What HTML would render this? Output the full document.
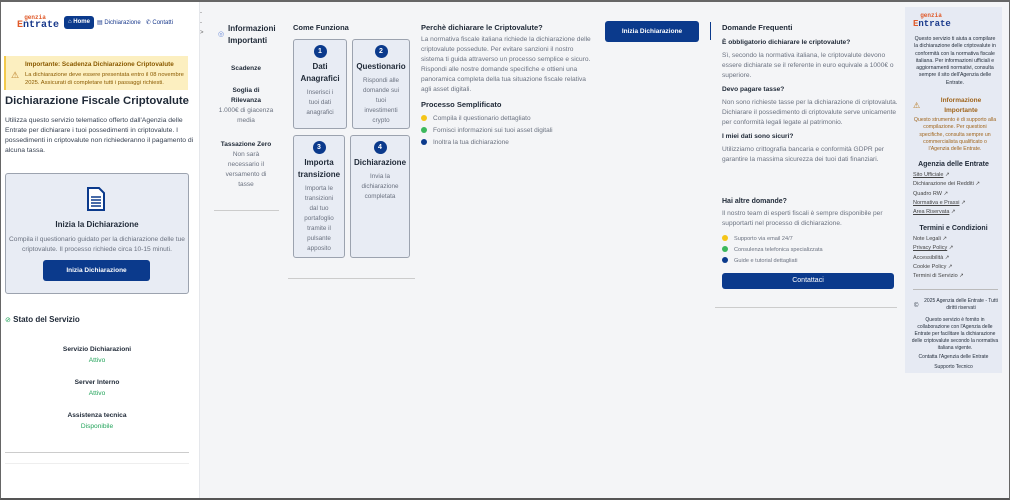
<!DOCTYPE html>
<html><head><meta charset="utf-8"><style>
*{box-sizing:border-box;margin:0;padding:0}
body{width:1010px;height:500px;overflow:hidden;font-family:"Liberation Sans",sans-serif;background:#f4f5f7;color:#1f2937;position:relative}
.frame{position:absolute;inset:0;border:1px solid #666;border-top:2px solid #666;border-bottom:2px solid #555;pointer-events:none;z-index:5}
.a{position:absolute}
.left{position:absolute;left:0;top:0;width:200px;height:500px;background:#fff;border-right:1px solid #e5e7eb}
.c{text-align:center}
.b{font-weight:bold}
.g{color:#6b7280}
.btn{background:#0b3a8c;color:#fff;border-radius:3px;font-size:6.5px;text-align:center;font-weight:bold}
.card{position:absolute;background:#e8ecf4;border:1px solid #9ca3af;border-radius:3px;text-align:center}
.num{width:13px;height:13px;border-radius:50%;background:#0b3a8c;color:#fff;font-size:7px;font-weight:bold;line-height:13px;margin:5px auto 3px}
.card h4{font-size:8px;line-height:12px;padding:0 3px}
.card p{font-size:6.3px;color:#6b7280;line-height:10px;margin-top:3px;padding:0 7px}
.dot{display:inline-block;width:6px;height:6px;border-radius:50%;margin-right:6px;vertical-align:-1px}
.lnk{font-size:5.5px;color:#444;line-height:9.3px}
</style></head><body>
<div class="frame"></div>
<div class="left">
  <div class="a" style="left:17px;top:14px;font-size:10px;font-weight:bold;line-height:8px;font-family:'Liberation Mono',monospace"><span style="color:#e05a2a;font-size:6px">&nbsp;&nbsp;genzia</span><br><span style="color:#1a3a8c"><span style="color:#e05a2a">E</span>ntrate</span></div>
  <div class="a btn" style="left:64px;top:16px;width:30px;height:13px;line-height:13px;font-size:6px">⌂ Home</div>
  <div class="a" style="left:97px;top:19px;font-size:6px;color:#1a3a8c">▤ Dichiarazione&nbsp;&nbsp;&nbsp;✆ Contatti</div>
  <div class="a" style="left:4px;top:56px;width:184px;height:34px;background:#fcefc0;border-left:2px solid #f3c94b"></div>
  <div class="a" style="left:11px;top:70px;font-size:9px;color:#b7791f">⚠</div>
  <div class="a" style="left:25px;top:61px;font-size:6.4px;color:#8a5a00;font-weight:bold">Importante: Scadenza Dichiarazione Criptovalute</div>
  <div class="a" style="left:25px;top:71px;font-size:5.8px;color:#8a5a00;line-height:8px;width:165px">La dichiarazione deve essere presentata entro il 08 novembre 2025. Assicurati di completare tutti i passaggi richiesti.</div>
  <div class="a b" style="left:5px;top:95px;font-size:11.3px">Dichiarazione Fiscale Criptovalute</div>
  <div class="a" style="left:5px;top:116px;width:190px;font-size:6.8px;line-height:10px;color:#374151">Utilizza questo servizio telematico offerto dall'Agenzia delle Entrate per dichiarare i tuoi possedimenti in criptovalute. I possedimenti in criptovalute non richiederanno il pagamento di alcuna tassa.</div>
  <div class="a" style="left:5px;top:173px;width:184px;height:121px;background:#e8ecf4;border:1px solid #9ca3af;border-radius:3px"></div>
  <svg class="a" style="left:87px;top:187px" width="18" height="24" viewBox="0 0 18 24"><path d="M1 1h11l5 5v17H1z" fill="#fff" stroke="#0b3a8c" stroke-width="2"/><path d="M4 10h10M4 13h10M4 16h10M4 19h10" stroke="#0b3a8c" stroke-width="1.5"/></svg>
  <div class="a b c" style="left:5px;top:220px;width:184px;font-size:8px">Inizia la Dichiarazione</div>
  <div class="a c" style="left:8px;top:235px;width:178px;font-size:6.6px;line-height:10px;color:#6b7280">Compila il questionario guidato per la dichiarazione delle tue criptovalute. Il processo richiede circa 10-15 minuti.</div>
  <div class="a btn" style="left:43px;top:260px;width:107px;height:21px;line-height:21px">Inizia Dichiarazione</div>
  <div class="a" style="left:5px;top:315px;font-size:8px"><span style="color:#22a35a;font-size:7px">⊘</span> <b>Stato del Servizio</b></div>
  <div class="a c" style="left:0;top:344px;width:194px;font-size:6.6px;line-height:11px"><b>Servizio Dichiarazioni</b><br><span style="color:#22a35a">Attivo</span></div>
  <div class="a c" style="left:0;top:377px;width:194px;font-size:6.6px;line-height:11px"><b>Server Interno</b><br><span style="color:#22a35a">Attivo</span></div>
  <div class="a c" style="left:0;top:410px;width:194px;font-size:6.6px;line-height:11px"><b>Assistenza tecnica</b><br><span style="color:#22a35a">Disponibile</span></div>
  <div class="a" style="left:5px;top:452px;width:184px;border-top:1px solid #ccc"></div>
  <div class="a" style="left:5px;top:463px;width:184px;border-top:1px solid #eee"></div>
</div>
<div class="a" style="left:200px;top:8px;font-size:6px;color:#666;line-height:10px">-<br>-<br>&gt;</div>
<div class="a" style="left:218px;top:30px;font-size:7px;color:#6b8ad9">◎</div>
<div class="a b" style="left:228px;top:23px;font-size:8px;line-height:12px">Informazioni<br>Importanti</div>
<div class="a c" style="left:213px;top:64px;width:66px;font-size:6.5px;line-height:10px"><b>Scadenze</b></div>
<div class="a c" style="left:216px;top:86px;width:60px;font-size:6.5px;line-height:10px"><b>Soglia di<br>Rilevanza</b><br><span class="g">1.000€ di giacenza media</span></div>
<div class="a c" style="left:216px;top:140px;width:60px;font-size:6.5px;line-height:10px"><b>Tassazione Zero</b><br><span class="g" style="display:block;padding:0 6px">Non sarà necessario il versamento di tasse</span></div>
<div class="a" style="left:214px;top:210px;width:65px;border-top:1px solid #ccc"></div>
<div class="a b" style="left:293px;top:23px;font-size:7.5px">Come Funziona</div>
<div class="card" style="left:293px;top:39px;width:54px;height:90px"><div class="num">1</div><h4>Dati<br>Anagrafici</h4><p>Inserisci i tuoi dati anagrafici</p></div>
<div class="card" style="left:352px;top:39px;width:58px;height:90px"><div class="num">2</div><h4>Questionario</h4><p>Rispondi alle domande sui tuoi investimenti crypto</p></div>
<div class="card" style="left:293px;top:135px;width:52px;height:123px"><div class="num">3</div><h4>Importa<br>transizione</h4><p>Importa le transizioni dal tuo portafoglio tramite il pulsante apposito</p></div>
<div class="card" style="left:350px;top:135px;width:60px;height:123px"><div class="num">4</div><h4>Dichiarazione</h4><p>Invia la dichiarazione completata</p></div>
<div class="a" style="left:288px;top:278px;width:127px;border-top:1px solid #ccc"></div>
<div class="a b" style="left:421px;top:23px;font-size:7.5px">Perchè dichiarare le Criptovalute?</div>
<div class="a g" style="left:421px;top:35px;width:175px;font-size:6.6px;line-height:10px">La normativa fiscale italiana richiede la dichiarazione delle criptovalute possedute. Per evitare sanzioni il nostro sistema ti guida attraverso un processo semplice e sicuro. Rispondi alle nostre domande specifiche e ottieni una panoramica completa della tua situazione fiscale relativa agli asset digitali.</div>
<div class="a b" style="left:421px;top:100px;font-size:7.5px">Processo Semplificato</div>
<div class="a g" style="left:421px;top:113px;font-size:6.5px;line-height:12px"><span class="dot" style="background:#f5c518"></span>Compila il questionario dettagliato<br><span class="dot" style="background:#3cb85c"></span>Fornisci informazioni sui tuoi asset digitali<br><span class="dot" style="background:#0b3a8c"></span>Inoltra la tua dichiarazione</div>
<div class="a btn" style="left:605px;top:21px;width:94px;height:21px;line-height:21px">Inizia Dichiarazione</div>
<div class="a" style="left:710px;top:22px;height:18px;border-left:1.5px solid #0b3a8c"></div>
<div class="a b" style="left:722px;top:23px;font-size:7.5px">Domande Frequenti</div>
<div class="a" style="left:722px;top:38px;width:178px;font-size:6.6px;line-height:10px">
<b>È obbligatorio dichiarare le criptovalute?</b><div class="g" style="margin:3px 0 4px">Sì, secondo la normativa italiana, le criptovalute devono essere dichiarate se il referente in euro equivale a 1000€ o superiore.</div>
<b>Devo pagare tasse?</b><div class="g" style="margin:3px 0 4px">Non sono richieste tasse per la dichiarazione di criptovaluta. Dichiarare il possedimento di criptovalute serve unicamente per conformità legali legate al patrimonio.</div>
<b>I miei dati sono sicuri?</b><div class="g" style="margin-top:3px">Utilizziamo crittografia bancaria e conformità GDPR per garantire la massima sicurezza dei tuoi dati finanziari.</div></div>
<div class="a b" style="left:722px;top:198px;font-size:7px">Hai altre domande?</div>
<div class="a g" style="left:722px;top:209px;width:175px;font-size:6.6px;line-height:10px">Il nostro team di esperti fiscali è sempre disponibile per supportarti nel processo di dichiarazione.</div>
<div class="a g" style="left:722px;top:234px;font-size:5.6px;line-height:11px"><span class="dot" style="background:#f5c518"></span>Supporto via email 24/7<br><span class="dot" style="background:#3cb85c"></span>Consulenza telefonica specializzata<br><span class="dot" style="background:#0b3a8c"></span>Guide e tutorial dettagliati</div>
<div class="a btn" style="left:722px;top:273px;width:172px;height:16px;line-height:16px;font-size:7px;font-weight:normal">Contattaci</div>
<div class="a" style="left:715px;top:307px;width:182px;border-top:1px solid #ccc"></div>
<div class="a" style="left:905px;top:7px;width:97px;height:366px;background:#e6eaf3"></div>
<div class="a" style="left:913px;top:11px;font-size:9px;font-weight:bold;line-height:8px;font-family:'Liberation Mono',monospace"><span style="color:#e05a2a;font-size:6px">&nbsp;&nbsp;genzia</span><br><span style="color:#1a3a8c"><span style="color:#e05a2a">E</span>ntrate</span></div>
<div class="a c" style="left:912px;top:36px;width:86px;font-size:5.2px;line-height:7.3px">Questo servizio ti aiuta a compilare la dichiarazione delle criptovalute in conformità con la normativa fiscale italiana. Per informazioni ufficiali e aggiornamenti normativi, consulta sempre il sito dell'Agenzia delle Entrate.</div>
<div class="a" style="left:913px;top:101px;font-size:8px;color:#b7791f">⚠</div>
<div class="a b c" style="left:922px;top:96px;width:78px;font-size:6.5px;line-height:10px;color:#a0651c">Informazione<br>Importante</div>
<div class="a c" style="left:912px;top:117px;width:86px;font-size:5.2px;line-height:7.3px;color:#a0651c">Questo strumento è di supporto alla compilazione. Per questioni specifiche, consulta sempre un commercialista qualificato o l'Agenzia delle Entrate.</div>
<div class="a b c" style="left:905px;top:161px;width:97px;font-size:7px">Agenzia delle Entrate</div>
<div class="a lnk" style="left:913px;top:171px"><u>Sito Ufficiale</u> ↗<br>Dichiarazione dei Redditi ↗<br>Quadro RW ↗<br><u>Normativa e Prassi</u> ↗<br><u>Area Riservata</u> ↗</div>
<div class="a b c" style="left:905px;top:225px;width:97px;font-size:7px">Termini e Condizioni</div>
<div class="a lnk" style="left:913px;top:235px"><span>Note Legali</span> ↗<br><u>Privacy Policy</u> ↗<br>Accessibilità ↗<br>Cookie Policy ↗<br>Termini di Servizio ↗</div>
<div class="a" style="left:913px;top:289px;width:85px;border-top:1px solid #bbb"></div>
<div class="a" style="left:914px;top:303px;font-size:6px">©</div>
<div class="a c" style="left:922px;top:298px;width:78px;font-size:5px;line-height:7.3px">2025 Agenzia delle Entrate - Tutti diritti riservati</div>
<div class="a c" style="left:910px;top:317px;width:90px;font-size:5px;line-height:7px">Questo servizio è fornito in collaborazione con l'Agenzia delle Entrate per facilitare la dichiarazione delle criptovalute secondo la normativa italiana vigente.</div>
<div class="a c" style="left:905px;top:352px;width:97px;font-size:5px;line-height:10px">Contatta l'Agenzia delle Entrate<br>Supporto Tecnico</div>
</body></html>
